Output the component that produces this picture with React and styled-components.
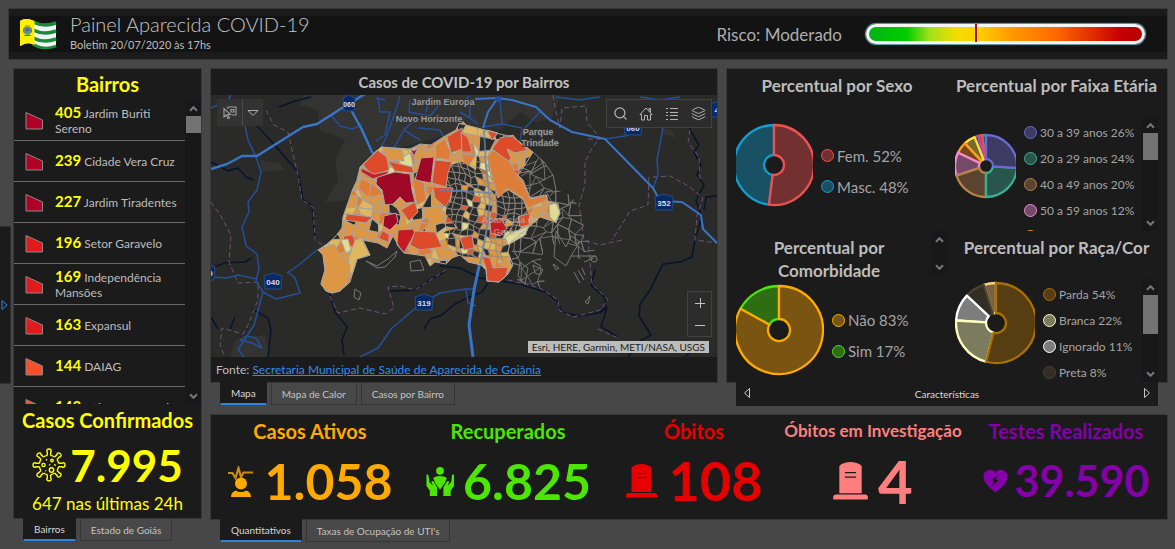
import React from 'react';
import styled, { createGlobalStyle } from 'styled-components';
import { Search, Layers } from 'lucide-react';

const GlobalStyle = createGlobalStyle`
  * {
    box-sizing: border-box;
  }

  body {
    margin: 0;
    background: #474747;
    color: #bdbdbd;
    font-family: Lato, "Liberation Sans", sans-serif;
    font-size: 12px;
  }

  button {
    font: inherit;
    color: inherit;
    background: none;
    border: 0;
    padding: 0;
    cursor: pointer;
  }

  h1, h2, p, ul {
    margin: 0;
    padding: 0;
  }

  ul {
    list-style: none;
  }
`;

/* ---------- data ---------- */

const districts = [
  { cases: 405, name: 'Jardim Buriti Sereno', color: '#b10026' },
  { cases: 239, name: 'Cidade Vera Cruz', color: '#b10026' },
  { cases: 227, name: 'Jardim Tiradentes', color: '#b10026' },
  { cases: 196, name: 'Setor Garavelo', color: '#e31a1c' },
  { cases: 169, name: 'Independência Mansões', color: '#e31a1c' },
  { cases: 163, name: 'Expansul', color: '#e31a1c' },
  { cases: 144, name: 'DAIAG', color: '#fc4e2a' },
  { cases: 143, name: 'Sítios Santa Luzia', color: '#fc4e2a' },
];

const sexo = [
  { label: 'Fem. 52%', value: 52, color: '#ed5151', fill: '#733030' },
  { label: 'Masc. 48%', value: 48, color: '#149ece', fill: '#1a5064' },
];

const faixa = [
  { label: '30 a 39 anos 26%', value: 26, color: '#6b6bd6', fill: '#3d3b63' },
  { label: '20 a 29 anos 24%', value: 24, color: '#3caf99', fill: '#29564b' },
  { label: '40 a 49 anos 20%', value: 20, color: '#b7814a', fill: '#5a4430' },
  { label: '50 a 59 anos 12%', value: 12, color: '#f789d8', fill: '#744a68' },
  { label: '60 a 69 anos 6%', value: 6, color: '#ff9a1f', fill: '#74481a' },
  { label: '10 a 19 anos 6%', value: 6, color: '#ffde3e', fill: '#756a2a' },
  { label: '0 a 9 anos 2%', value: 2, color: '#a553b7', fill: '#5b3264' },
  { label: '70 a 79 anos 2%', value: 2, color: '#ed5151', fill: '#ad3b3b' },
  { label: '80 anos 2%', value: 2, color: '#149ece', fill: '#1a5064' },
];

const comorbidade = [
  { label: 'Não 83%', value: 83, color: '#ffaa00', fill: '#7a5511' },
  { label: 'Sim 17%', value: 17, color: '#4ce600', fill: '#2f6d12' },
];

const raca = [
  { label: 'Parda 54%', value: 54, color: '#a87000', fill: '#573d12' },
  { label: 'Branca 22%', value: 22, color: '#ffffbe', fill: '#7b7b60' },
  { label: 'Ignorado 11%', value: 11, color: '#ffffff', fill: '#7d7d7d' },
  { label: 'Preta 8%', value: 8, color: '#4b4232', fill: '#322d25' },
  { label: 'Amarela 5%', value: 5, color: '#ffd37f', fill: '#7a6242' },
];

/* ---------- page ---------- */

const Page = styled.div`
  position: relative;
  display: flex;
  flex-direction: column;
  gap: 10px;
  min-height: 100vh;
  padding: 9px 8px 8px 9px;
`;

const Header = styled.header`
  padding: 7px 0;
  height: 50px;
  background: #1b1b1b;
  outline: 1px solid #383838;
`;

const HeaderBand = styled.div`
  display: flex;
  align-items: center;
  height: 36px;
  padding: 0 22px 0 10px;
  background: #131313;
`;

const HeaderText = styled.div`
  margin-left: 13px;
  flex: 1;
`;

const Title = styled.h1`
  font-size: 20px;
  line-height: 22px;
  font-weight: 300;
  color: #c6c6c6;
`;

const Subtitle = styled.p`
  font-size: 11px;
  line-height: 20px;
`;

const Risk = styled.span`
  font-size: 17px;
  margin-right: 24px;
  color: #aeaeae;
`;

const Gauge = styled.div`
  position: relative;
  width: 279px;
  height: 20px;
  border: 3px solid #f4f4f4;
  border-radius: 11px;
  box-shadow: 0 0 1px 1px #6fa3a8;
  background: linear-gradient(90deg, #00b414 0%, #00cd00 14%, #9fe01a 22%, #f5dc00 32%, #ffd000 40%, #ff9a00 52%, #ff6a00 68%, #c80000 92%, #b40000 100%);

  &::after {
    content: '';
    position: absolute;
    left: 39%;
    top: -3px;
    bottom: -1px;
    width: 2px;
    background: #a01414;
  }
`;

const Body = styled.div`
  display: grid;
  grid-template-columns: 187px 1fr;
  column-gap: 10px;
  flex: 1;
  padding-left: 5px;
`;

const Column = styled.div`
  display: flex;
  flex-direction: column;
  min-width: 0;
`;

const Panel = styled.section`
  background: #1b1b1b;
  outline: 1px solid #383838;
`;

const Right = styled.div`
  display: flex;
  flex-direction: column;
  gap: 9px;
  min-width: 0;
`;

const UpperRow = styled.div`
  display: grid;
  grid-template-columns: 506fr 440fr;
  gap: 10px;
`;

const Drawer = styled.button`
  position: absolute;
  left: 0;
  top: 226px;
  width: 11px;
  height: 158px;
  display: flex;
  align-items: center;
  background: #1b1b1b;
  border: 1px solid #303030;
  border-left: 0;
`;

const Tabs = styled.div`
  display: flex;
  gap: 4px;
  padding-left: 9px;
`;

const Tab = styled.button`
  height: 23px;
  padding: 0 10px;
  font-size: 10px;
  color: ${({ $active }) => ($active ? '#d8d8d8' : '#c4c4c4')};
  background: ${({ $active }) => ($active ? '#1b1b1b' : '#484848')};
  border: 1px solid ${({ $active }) => ($active ? '#1b1b1b' : '#363636')};
  border-bottom: ${({ $active }) => ($active ? '2px solid #2a84de' : '1px solid #363636')};
`;

/* ---------- list ---------- */

const ListTitle = styled.h2`
  font-size: 20px;
  line-height: 31px;
  font-weight: 700;
  text-align: center;
  color: #ffff00;
`;

const ListArea = styled.div`
  display: flex;
  height: 304px;
  overflow: hidden;
`;

const List = styled.ul`
  flex: 1;
  min-width: 0;
`;

const ListItem = styled.li`
  display: flex;
  align-items: center;
  height: 41px;
  padding: 0 2px 0 11px;
  border-bottom: 1px solid #6a6a6a;
  font-size: 12px;
  line-height: 15px;

  svg {
    flex: none;
    margin-right: 11px;
  }

  strong {
    font-size: 15px;
    line-height: 15px;
    color: #ffff00;
  }
`;

const ScrollTrack = styled.div`
  display: flex;
  flex-direction: column;
  flex: none;
  align-self: ${({ $top }) => ($top ? 'flex-start' : 'stretch')};
  align-items: center;
  width: 16px;
  height: ${({ $height }) => ($height ? `${$height}px` : 'auto')};
  background: #18181a;
`;

const ScrollButton = styled.button`
  display: flex;
  align-items: center;
  justify-content: center;
  width: 16px;
  height: 16px;
`;

const ScrollThumb = styled.div`
  width: 15px;
  height: ${({ $size }) => $size}px;
  background: #737375;
`;

const Spacer = styled.div`
  flex: 1;
`;

const Confirmed = styled.div`
  height: 114px;
  text-align: center;
  color: #ffff00;
`;

const ConfirmedTitle = styled.h2`
  font-size: 20px;
  line-height: 32px;
  font-weight: 700;
  white-space: nowrap;
`;

const ConfirmedValue = styled.div`
  display: flex;
  align-items: center;
  justify-content: center;
  gap: 4px;
  height: 58px;
  font-size: 44px;
  font-weight: 700;
`;

const ConfirmedNote = styled.p`
  font-size: 17px;
  line-height: 20px;
`;

/* ---------- map ---------- */

const MapTitle = styled.h2`
  font-size: 15px;
  line-height: 26px;
  font-weight: 700;
  text-align: center;
  color: #c2c2c2;
`;

const MapArea = styled.div`
  position: relative;
  height: 262px;
  background: #2a2a28;

  > svg {
    display: block;
    width: 100%;
    height: 100%;
  }
`;

const Tools = styled.div`
  position: absolute;
  top: 4px;
  left: 6px;
  display: flex;
  height: 27px;
  background: #333333;

  button {
    display: flex;
    align-items: center;
    justify-content: center;
    width: 25px;
  }

  button + button {
    width: 21px;
    border-left: 1px solid #4a4a4a;
  }
`;

const Toolbar = styled.div`
  position: absolute;
  top: 4px;
  right: 5px;
  display: flex;
  align-items: center;
  height: 29px;
  background: #2c2c2c;
  border: 1px solid #424242;
  color: #b4b4b4;

  button {
    display: flex;
    justify-content: center;
    width: 26px;
  }
`;

const Zoom = styled.div`
  position: absolute;
  right: 5px;
  bottom: 20px;
  display: flex;
  flex-direction: column;
  width: 25px;
  background: #2c2c2c;
  border: 1px solid #424242;

  button {
    display: flex;
    align-items: center;
    justify-content: center;
    height: 22px;
  }
`;

const Attribution = styled.span`
  position: absolute;
  right: 8px;
  bottom: 4px;
  padding: 0 4px;
  font-size: 10px;
  line-height: 12px;
  color: #202020;
  background: #bcbcba;
`;

const Source = styled.p`
  padding-left: 5px;
  font-size: 12px;
  line-height: 25px;

  a {
    color: #2e8ef0;
  }
`;

/* ---------- charts ---------- */

const Charts = styled(Panel)`
  display: grid;
  grid-template-columns: 211fr 203fr;
  grid-template-rows: 162px 151px;
  column-gap: 8px;
  padding: 0 9px;
`;

const ChartCell = styled.div`
  display: flex;
  flex-direction: column;
  min-width: 0;
  min-height: 0;
`;

const ChartHead = styled.div`
  display: flex;
  flex: none;
  height: ${({ $height }) => $height}px;
`;

const ChartTitle = styled.h2`
  flex: 1;
  padding: 5px ${({ $inset }) => $inset || 0}px 0 0;
  font-size: 17px;
  line-height: 23px;
  font-weight: 700;
  text-align: center;
  white-space: ${({ $wrap }) => ($wrap ? 'normal' : 'nowrap')};
`;

const ChartBody = styled.div`
  display: flex;
  align-items: center;
  flex: 1;
  min-height: 0;
  overflow: hidden;

  > svg {
    flex: none;
    margin-bottom: ${({ $dense }) => ($dense ? '16px' : '0')};
  }
`;

const Legend = styled.ul`
  flex: 1;
  align-self: ${({ $dense }) => ($dense ? 'flex-start' : 'center')};
  padding: ${({ $dense }) => ($dense ? '2px 0 0 8px' : '12px 0 0 8px')};
  font-size: ${({ $dense }) => ($dense ? '12px' : '15px')};
  color: #a4a4a4;
`;

const LegendItem = styled.li`
  display: flex;
  align-items: center;
  gap: 3px;
  height: ${({ $dense }) => ($dense ? '26px' : '31px')};
  white-space: nowrap;
`;

const Dot = styled.span`
  width: 13px;
  height: 13px;
  border-radius: 50%;
  border: 1px solid ${({ $color }) => $color};
  background: ${({ $fill }) => $fill};
`;

const Carousel = styled.nav`
  display: flex;
  align-items: center;
  justify-content: space-between;
  height: 24px;
  margin: 0 9px;
  padding: 0 7px;
  font-size: 10px;
  color: #dadada;
  background: #1b1b1b;
`;

/* ---------- metrics ---------- */

const Metrics = styled(Panel)`
  display: grid;
  grid-template-columns: 198fr 198fr 174fr 184fr 202fr;
  height: 104px;
`;

const Metric = styled.div`
  display: flex;
  flex-direction: column;
  align-items: center;
  color: ${({ $color }) => $color};
`;

const MetricTitle = styled.h2`
  font-size: ${({ $small }) => ($small ? '17px' : '20px')};
  line-height: 32px;
  font-weight: 700;
  white-space: nowrap;
`;

const MetricValue = styled.div`
  display: flex;
  align-items: center;
  gap: ${({ $gap }) => $gap || 12}px;
  height: 68px;
  font-size: ${({ $size }) => $size}px;
  line-height: 60px;
  font-weight: 700;
`;

/* ---------- helpers ---------- */

const Chevron = ({ down }) => (
  <svg width="9" height="7" viewBox="0 0 9 7" fill="none" stroke="#77777a" strokeWidth="2">
    <path d={down ? 'M1 1.2L4.5 4.8L8 1.2' : 'M1 5.8L4.5 2.2L8 5.8'} />
  </svg>
);

const Scrollbar = ({ thumb, height, top }) => (
  <ScrollTrack $height={height} $top={top}>
    <ScrollButton type="button" aria-label="Rolar para cima"><Chevron /></ScrollButton>
    {thumb && <ScrollThumb $size={thumb} />}
    <Spacer />
    <ScrollButton type="button" aria-label="Rolar para baixo"><Chevron down /></ScrollButton>
  </ScrollTrack>
);

const point = (cx, cy, r, t) => {
  const a = t * Math.PI * 2 - Math.PI / 2;
  return `${(cx + r * Math.cos(a)).toFixed(2)} ${(cy + r * Math.sin(a)).toFixed(2)}`;
};

const Pie = ({ data, width, height, cx, r, inner }) => {
  const cy = height / 2;
  const total = data.reduce((sum, d) => sum + d.value, 0);
  let start = 0;
  const slices = data.map((d) => {
    const a = start / total;
    start += d.value;
    const b = start / total;
    const large = b - a > 0.5 ? 1 : 0;
    const path = `M${point(cx, cy, r, a)}A${r} ${r} 0 ${large} 1 ${point(cx, cy, r, b)}L${point(cx, cy, inner, b)}A${inner} ${inner} 0 ${large} 0 ${point(cx, cy, inner, a)}Z`;
    return { ...d, path };
  });

  return (
    <svg width={width} height={height} viewBox={`0 0 ${width} ${height}`}>
      {[...slices].reverse().map((s) => (
        <path key={s.label} d={s.path} fill={s.fill} stroke={s.color} strokeWidth="2.300" strokeLinejoin="round" />
      ))}
    </svg>
  );
};

const Chart = ({ title, data, pie, dense, headHeight, inset, wrap, thumb }) => (
  <ChartCell>
    <ChartHead $height={headHeight}>
      <ChartTitle $wrap={wrap} $inset={inset}>{title}</ChartTitle>
      {wrap && <Scrollbar height={44} top />}
    </ChartHead>
    <ChartBody $dense={dense}>
      <Pie data={data} {...pie} />
      <Legend $dense={dense}>
        {data.map((d) => (
          <LegendItem key={d.label} $dense={dense}>
            <Dot $color={d.color} $fill={d.fill} />
            {d.label}
          </LegendItem>
        ))}
      </Legend>
      {thumb && <Scrollbar thumb={thumb} />}
    </ChartBody>
  </ChartCell>
);

/* ---------- icons ---------- */

const Flag = () => (
  <svg width="38" height="32" viewBox="0 0 38 32">
    <path d="M1 3C6 0 10 1 15 3C22 7 29 7 37 4V28C29 32 22 31 15 27C10 24 6 25 1 28Z" fill="#f2f6f2" />
    <g fill="none" stroke="#1c8a3c" strokeWidth="3.600">
      <path d="M14 4C22 8 29 8 37 5" />
      <path d="M14 12C22 16 29 16 37 13" />
      <path d="M14 20C22 24 29 24 37 21" />
      <path d="M14 26.500C22 31 29 31 37 28" strokeWidth="2.600" />
    </g>
    <path d="M1 3C6 0 10 1 15.500 3V27C10 24 6 25 1 28Z" fill="#fff000" />
    <path d="M5 9h7v6q-3.500 4-7 0Z" fill="#5d958c" />
    <path d="M6 8h5M4.500 10.500v4M12.500 10.500v4M5 17.500h7M8.500 9.500v5M6 12.500h5" stroke="#77763c" strokeWidth="1" fill="none" />
    <path d="M7 10.500h3v2H7Z" fill="#3a6dac" />
  </svg>
);

const spikes = [0, 45, 90, 135, 180, 225, 270, 315];

const Virus = () => (
  <svg width="34" height="34" viewBox="-17 -17 34 34" fill="none" stroke="currentColor" strokeWidth="1.400">
    {spikes.map((angle) => (
      <g key={angle} transform={`rotate(${angle})`}>
        <path d="M-1.700 -9.600V-13C-3 -14.200 -2 -16 0 -16C2 -16 3 -14.200 1.700 -13V-9.600" />
        <path d="M1.700 -9.600A9.750 9.750 0 0 1 5.600 -8" />
      </g>
    ))}
    <circle cx="-5.500" cy="0" r="1.600" />
    <circle cx="2.500" cy="5" r="2.200" />
    <circle cx="3" cy="-4.500" r="1.200" />
    <path d="M-3 -5.500l1 .5M5.500 .5l1 -1M-3.500 5.500l.5 .5M.2 -.5l.8 .6" strokeWidth="1.800" />
  </svg>
);

const Sick = () => (
  <svg width="25" height="31" viewBox="0 0 25 31">
    <path d="M0 7H4.500L7.500 12L10.500 2L13 11L15.500 6.500H25" fill="none" stroke="#c98c10" strokeWidth="2.200" />
    <circle cx="13" cy="17.500" r="6" fill="currentColor" />
    <path d="M3 31C3 28 4.500 25.500 8 24.500C11 26.500 15 26.500 18 24.500C21.500 25.500 23 28 23 31Z" fill="currentColor" />
  </svg>
);

const Hands = () => (
  <svg width="31" height="31" viewBox="0 0 32 31" fill="currentColor">
    <circle cx="15.500" cy="4.500" r="4" />
    <path d="M8.500 12C11 9 20 9 22.500 12L20.500 17L15.500 24L10.500 17Z" />
    <path d="M1.500 8.500C2.500 8 3.500 8.500 3.700 9.500L4.500 16L8 19.500L6.500 15.500C7.500 14.500 8.700 15 9.200 16L12.500 21.500V30.500H5V25L1.500 20Z" />
    <path d="M30 8.500C29 8 28 8.500 27.800 9.500L27 16L23.500 19.500L25 15.500C24 14.500 22.800 15 22.300 16L19 21.500V30.500H26.500V25L30 20Z" />
  </svg>
);

const Tombstone = ({ size }) => (
  <svg width={size - 1} height={size + 2} viewBox="0 0 31 34">
    <path d="M5.500 28V3.500C8 1 12 0 15.500 0C19 0 23 1 25.500 3.500V28Z" fill="currentColor" />
    <path d="M0 33.500V31.500Q0 29 2.500 29H28.500Q31 29 31 31.500V33.500Z" fill="currentColor" />
    <path d="M10.500 9.500h10M10.500 13.500h10" stroke="#1b1b1b" strokeWidth="1.200" />
  </svg>
);

const BrokenHeart = () => (
  <svg width="25" height="24" viewBox="0 0 25 24">
    <path d="M12.500 23.500C8 19.500 0 14 .5 7C1 1 9 -1.500 12.500 3.500C16 -1.500 24 1 24.500 7C25 14 17 19.500 12.500 23.500Z" fill="currentColor" />
    <path d="M14.500 6.500L8.500 11L11 12L9 17L15.500 11.500L12.800 10.500Z" fill="#1b1b1b" />
  </svg>
);

/* ---------- map drawing ---------- */

const random = (seed) => {
  let s = seed;
  return () => {
    s = (s * 16807) % 2147483647;
    return s / 2147483647;
  };
};

const buildCells = (x0, y0, x1, y1, size, jitter, seed) => {
  const rnd = random(seed);
  const rows = [];
  for (let y = y0; y <= y1 + size; y += size) {
    const row = [];
    for (let x = x0; x <= x1 + size; x += size) {
      row.push([
        x + (rnd() - 0.5) * jitter * 2 + Math.sin(y / 14) * 4,
        y + (rnd() - 0.5) * jitter * 2 + Math.sin(x / 19) * 6,
      ]);
    }
    rows.push(row);
  }
  const cells = [];
  for (let j = 0; j < rows.length - 1; j += 1) {
    for (let i = 0; i < rows[j].length - 1; i += 1) {
      const quad = [rows[j][i], rows[j][i + 1], rows[j + 1][i + 1], rows[j + 1][i]];
      cells.push({
        x: quad[0][0],
        y: quad[0][1],
        v: rnd(),
        points: quad.map((p) => `${p[0].toFixed(1)},${p[1].toFixed(1)}`).join(' '),
      });
    }
  }
  return cells;
};

const empty = '#2c2c2a';

const wideColor = ({ v }) => {
  if (v < 0.5) return '#dc9644';
  if (v < 0.64) return '#de7d38';
  if (v < 0.82) return '#dfb75f';
  if (v < 0.88) return '#dedc94';
  if (v < 0.95) return empty;
  return '#dd4d2b';
};

const denseColor = ({ x, y, v }) => {
  const blank = y < 232 && (x < 474 || x > 494) ? 0.86 : 0.26;
  if (v < blank) return empty;
  const rest = (v - blank) / (1 - blank);
  if (rest < 0.4) return '#dc9644';
  if (rest < 0.72) return '#dfb75f';
  if (rest < 0.86) return '#dedc94';
  return '#de5b30';
};

const wideCells = buildCells(314, 110, 562, 296, 9, 4, 4177);
const denseCells = buildCells(440, 155, 530, 264, 6, 2, 913);
const eastCells = buildCells(500, 145, 600, 290, 9, 5, 2718);

const outline = '360,167 381,147 410,149 420,144 431,145 445,136 456,130 461,119 466,125 485,130 500,134 513,137 521,143 533,152 525,165 516,178 523,182 530,199 546,195 548,201 558,204 560,214 555,222 540,217 528,228 510,243 508,252 513,265 508,274 499,282 487,281 486,270 481,265 468,262 460,255 452,258 446,264 435,262 430,266 425,256 404,253 398,245 393,236 387,248 378,243 362,240 370,255 357,259 352,275 350,282 340,291 332,293 326,291 321,284 325,270 323,255 318,250 327,244 335,237 342,228 343,217 352,191 357,180';
const denseOutline = '447,166 462,162 476,170 478,140 486,145 490,170 498,198 508,190 523,200 529,216 510,243 508,262 484,258 460,256 448,246 444,232 458,228 446,214';
const eastOutline = '531,152 544,162 553,175 556,190 570,195 580,208 583,222 586,240 595,250 592,262 578,258 566,240 556,246 548,240 540,262 546,288 530,284 518,282 512,262 512,244 528,228 540,217 556,222 560,208 548,200 530,200 516,178 526,164';

const highlights = [
  ['#a00828', '377,177 395,172 410,174 412,190 415,202 406,203 400,197 393,204 385,205 382,190 376,184'],
  ['#a00828', '421,158 434,157 431,183 415,180'],
  ['#a00828', '384,216 396,213 398,222 390,230 383,226'],
  ['#a00828', '410,148 414,151 418,148 414,156'],
  ['#dd4b2a', '363,165 377,150 387,157 389,170 373,176'],
  ['#c2202a', '361,168 374,174 389,171 387,174 373,179 361,172'],
  ['#dd4b2a', '388,161 412,167 414,173 395,171'],
  ['#dc9644', '382,147 402,150 404,161 388,160'],
  ['#de7d38', '435,146 445,139 451,153 449,160 436,158'],
  ['#dd4b2a', '435,160 452,162 448,173 446,187 432,183'],
  ['#dd4b2a', '433,187 453,188 450,200 445,207 435,198'],
  ['#dd4b2a', '447,137 462,128 465,148 451,153'],
  ['#dd4b2a', '461,132 468,138 472,152 462,152'],
  ['#dd4b2a', '487,130 498,133 492,140'],
  ['#dd4b2a', '492,149 500,138 513,135 517,140 527,150 515,153 507,149 511,158 508,162'],
  ['#de7d38', '487,157 493,150 510,162 515,172 523,180 530,198 547,195 547,200 528,208 523,198 507,188 498,198'],
  ['#dd4b2a', '401,210 415,202 418,212 409,221'],
  ['#dd4b2a', '345,220 347,214 372,217 366,223'],
  ['#c41c22', '398,230 413,229 415,233 404,253 397,245'],
  ['#dd4b2a', '415,231 435,232 442,247 420,250 410,245'],
  ['#de7d38', '412,178 424,183 426,200 417,205'],
  ['#dc9644', '426,208 440,206 446,222 430,226'],
  ['#c41c22', '490,222 500,218 507,228 500,236 491,233'],
  ['#dedc94', '505,237 514,232 529,226 525,235 508,245'],
  ['#dd4b2a', '518,217 530,213 529,225 520,227'],
  ['#dedc94', '549,205 556,203 560,212 556,223 550,217'],
  ['#dd4b2a', '460,238 472,235 474,248 464,250'],
  ['#dd4b2a', '482,256 490,258 493,268 508,267 506,276 499,282 487,281 486,268'],
  ['#dfb75f', '349,258 355,240 362,238 370,255 357,259 352,275 348,268'],
  ['#dc9644', '318,250 334,244 342,256 350,265 348,282 340,291 332,293 326,291 321,284 325,270 323,255'],
  ['#de7d38', '336,248 342,242 346,250 340,254'],
  ['#dedc94', '341,240 348,239 351,250 346,253'],
];

const Shield = ({ x, y, label, small }) => {
  const w = small ? 6 : 9;
  return (
    <g transform={`translate(${x} ${y})`}>
      <path
        d={`M${-w} -5L0 -8L${w} -5L${w - 1} 8H${1 - w}Z`}
        fill="#062a66"
        stroke="#274c85"
        strokeWidth="1"
      />
      <text y="4" textAnchor="middle" fontSize={small ? 7 : 8} fontWeight="700" fill="#d4dcec">{label}</text>
    </g>
  );
};

const CityMap = () => (
  <svg
    viewBox="211 95 506 262"
    preserveAspectRatio="xMidYMid slice"
    fontFamily="Liberation Sans, sans-serif"
    role="img"
    aria-label="Mapa de casos por bairro"
  >
    <defs>
      <clipPath id="city"><polygon points={outline} /></clipPath>
      <clipPath id="dense"><polygon points={denseOutline} /></clipPath>
      <clipPath id="east"><polygon points={eastOutline} /></clipPath>
    </defs>

    <g fill="#333332">
      <path d="M303 95H560L552 118L535 122L520 112L500 130L470 128L400 148L372 165L350 200L325 202L338 180L335 160L345 140L320 130L318 110L300 105Z" />
      <path d="M260 160L280 163L284 170L262 172ZM235 340L265 335L270 357H230ZM660 128L672 130L676 138L662 134Z" />
    </g>

    <g fill="none" stroke="#08132d" strokeWidth="1.500">
      <path d="M279 107L295 101L311 97" />
      <path d="M257 126L272 142L284 156L298 172L303 200L312 206L315 240" />
      <path d="M211 162L228 171L238 168L246 177L253 180" />
      <path d="M211 268L225 263L245 262L252 258" />
      <path d="M252 309L268 318L271 330L268 357M211 317L218 329M235 317L230 329" />
      <path d="M330 294L335 312L347 327L342 340L344 355" />
      <path d="M424 329L430 319L442 315L455 304L465 299L482 292L488 283" />
      <path d="M440 266L460 268L480 278L520 284L545 292L558 302L562 312L578 316L598 313L606 308L605 298L591 285L595 270" />
      <path d="M390 291L415 290L430 280L446 271" />
      <path d="M717 196L706 197L704 210M690 112L690 130L699 145L694 152L701 165L697 175L704 185L696 200L702 218L696 235L692 257L680 262L663 264L650 290L640 304L639 316L651 335L640 341L628 357" />
      <path d="M600 313L607 308L601 327L618 337M700 343L685 357" />
    </g>

    <g fill="none" stroke="#6a5673" strokeWidth="1" strokeDasharray="5 3">
      <path d="M266 110L274 125L288 132L292 150L298 175L302 200L313 207L315 240L330 250" />
      <path d="M211 202L222 218L231 235L229 262L238 283L258 282L258 300L248 325L243 334L222 328L220 345L225 357" />
      <path d="M330 296L338 313L360 308L385 314L394 308L388 287L400 286L415 290L446 270" />
      <path d="M553 95L556 112L560 128L562 108L586 106L587 122L600 138L592 148L585 162L585 185L579 205L584 240L600 245L622 240" />
      <path d="M601 139L587 139M653 177L670 176L690 187L703 198L697 215L695 240L717 243M649 177L648 205L630 211L622 224L612 240" />
      <path d="M508 280L540 288L558 300L560 311L574 317L600 310L608 300L592 284L590 262L588 240" />
      <path d="M598 329L618 338M690 130L688 142L699 157L700 180" />
    </g>

    <g fill="none" stroke="#24509a" strokeWidth="1.500" strokeLinejoin="round">
      <path d="M245 126L248 140L256 157L261 172L257 190L248 202L249 212L242 227L246 246L257 254L259 268L256 281L263 292L254 325L238 350L244 357" />
      <path d="M211 277L227 278L238 275L257 279M287 273L300 264L318 249M263 292L276 299L300 293L295 278L288 272" />
      <path d="M211 108L228 100L231 95M240 340L252 343L262 348L256 338L246 336Z" />
      <path d="M332 116L340 126L352 129L362 125" />
      <path d="M374 160L386 138L398 104L400 95M378 98L380 112L390 112L385 135L376 141M394 148L404 130L412 122L425 117L436 123L456 118" />
      <path d="M410 100L409 112L430 116L440 104L462 104L470 95M430 95L426 112M404 130L420 140M470 99V118L478 124M500 98L502 124L522 128L520 142M483 127L502 124M525 128L540 112M534 146L540 140M460 112L470 118M385 100L376 98M418 128L440 130L445 140" />
      <path d="M605 139L625 136L640 128M663 128L657 160L658 175L653 188M640 97L660 100L680 97M556 97L580 100L600 97" />
      <path d="M360 357L378 348L392 328L418 306L440 293L465 289L475 289" />
      <path d="M466 290L468 303L476 306" />
    </g>

    <g fill="none" stroke="#3875c9" strokeWidth="3" strokeLinejoin="round">
      <path d="M211 169L227 164L242 156L257 156L303 127L317 124L342 108L365 94" strokeWidth="2.500" />
      <path d="M350 108L362 130L372 152L378 158" strokeWidth="2.500" />
      <path d="M475 99L497 98L512 100L536 107L550 120L572 132L605 139L653 188L660 201L682 202L701 215L703 229L717 243" strokeWidth="2" />
      <path d="M497 99L488 112L483 128" strokeWidth="2" />
      <path d="M480 262L474 290L469 325L473 357" />
    </g>
    <circle cx="498" cy="99" r="3" fill="#24509a" />

    <g clipPath="url(#east)" fill="none" stroke="#777775" strokeWidth="0.900">
      {eastCells.map((c) => (c.v > 0.4 ? <polygon key={c.points} points={c.points} /> : null))}
    </g>
    <g fill="none" stroke="#777775" strokeWidth="1">
      <path d="M533 152L544 162L553 175L556 190L550 196M544 162L533 170L521 176M553 175L538 183L526 186" />
      <path d="M366 261L377 266L388 259L397 251L395 257L385 267L377 268ZM410 262L420 260L424 270L411 271ZM355 289L361 293L359 300L354 297ZM556 231L566 247L571 236L580 242L571 256L566 266L554 257ZM571 256H596M584 262L594 258M585 302L590 296L588 304ZM574 272L580 283M578 270L584 280M582 268L585 275M533 265L543 270L540 275L535 273ZM553 264L559 268L556 270ZM520 262L528 268L525 284L518 276Z" />
      <circle cx="594" cy="259" r="3" />
    </g>

    <g clipPath="url(#city)" stroke="#aaa49c" strokeWidth="1">
      {wideCells.map((c) => <polygon key={c.points} points={c.points} fill={wideColor(c)} />)}
      <g clipPath="url(#dense)" stroke="#8f8c87" strokeWidth="0.800">
        {denseCells.map((c) => <polygon key={c.points} points={c.points} fill={denseColor(c)} />)}
      </g>
    </g>
    <g stroke="#aaa49c" strokeWidth="1" strokeLinejoin="round">
      {highlights.map(([fill, points]) => <polygon key={points} points={points} fill={fill} />)}
      <polygon points={outline} fill="none" />
    </g>
    <path d="M484 130L486 165L490 200L486 235L480 264M440 190L462 191L491 193" fill="none" stroke="#5d86bd" strokeWidth="2" opacity="0.700" />

    <g fill="#9b9b99" fontSize="9" fontWeight="700" textAnchor="middle" stroke="#333332" strokeWidth="2" paintOrder="stroke">
      <text x="443" y="105">Jardim Europa</text>
      <text x="429" y="122">Novo Horizonte</text>
      <text x="538" y="135">Parque</text>
      <text x="540" y="146">Trindade</text>
    </g>
    <g fill="#bdbdb8" fontSize="9" fontWeight="700" textAnchor="middle" opacity="0.600">
      <text x="510" y="223">Aparecida de</text>
      <text x="510" y="235">Goiânia</text>
    </g>

    <Shield x={349} y={103} label="060" small />
    <Shield x={273} y={281} label="040" />
    <Shield x={424} y={302} label="319" />
    <Shield x={664} y={202} label="352" />
    <Shield x={633} y={127} label="060" />
    <Shield x={719} y={109} label="40" />
    <Shield x={206} y={272} label="060" />
  </svg>
);

const MapPanel = () => (
  <Column>
    <Panel>
      <MapTitle>Casos de COVID-19 por Bairros</MapTitle>
      <MapArea>
        <CityMap />
        <Tools>
          <button type="button" aria-label="Selecionar">
            <svg width="14" height="14" viewBox="0 0 14 14" fill="none" stroke="#a0a0a0" strokeWidth="1.100">
              <path d="M1 2.500V11L3.200 9L5 12.500L6.500 11.700L4.800 8.500H7.500Z" />
              <path d="M5 3V1H13V9H8.500M8 6V3.500H11V6Z" />
            </svg>
          </button>
          <button type="button" aria-label="Opções de seleção">
            <svg width="12" height="8" viewBox="0 0 12 8" fill="none" stroke="#b0b0b0"><path d="M1 1.500H11L6 6.500Z" /></svg>
          </button>
        </Tools>
        <Toolbar>
          <button type="button" aria-label="Pesquisar"><Search size={15} strokeWidth={2} /></button>
          <button type="button" aria-label="Início">
            <svg width="14" height="14" viewBox="0 0 14 14" fill="none" stroke="currentColor" strokeWidth="1">
              <path d="M1 7.500L7 1L13 7.500H11.500V13H8.500V8.500H5.500V13H2.500V7.500ZM10 4V1.500H11.500V5.500" />
            </svg>
          </button>
          <button type="button" aria-label="Legenda">
            <svg width="14" height="14" viewBox="0 0 14 14" fill="none" stroke="currentColor" strokeWidth="1">
              <path d="M1 1.500h2M5 1.500h8M1 5.500h2M5 5.500h8M1 8.500h2M5 8.500h8M1 12.500h2M5 12.500h8" />
            </svg>
          </button>
          <button type="button" aria-label="Camadas"><Layers size={15} strokeWidth={1.5} /></button>
        </Toolbar>
        <Zoom>
          <button type="button" aria-label="Aproximar">
            <svg width="12" height="12" viewBox="0 0 12 12" stroke="#c4c4c4"><path d="M1 6.500H11M6.500 1V11" /></svg>
          </button>
          <button type="button" aria-label="Afastar">
            <svg width="12" height="12" viewBox="0 0 12 12" stroke="#c4c4c4"><path d="M1 6.500H11" /></svg>
          </button>
        </Zoom>
        <Attribution>Esri, HERE, Garmin, METI/NASA, USGS</Attribution>
      </MapArea>
      <Source>
        Fonte: <a href="#fonte">Secretaria Municipal de Saúde de Aparecida de Goiânia</a>
      </Source>
    </Panel>
    <Tabs>
      <Tab type="button" $active>Mapa</Tab>
      <Tab type="button">Mapa de Calor</Tab>
      <Tab type="button">Casos por Bairro</Tab>
    </Tabs>
  </Column>
);

const App = () => (
  <>
    <GlobalStyle />
    <Page>
      <Header>
        <HeaderBand>
          <Flag />
          <HeaderText>
            <Title>Painel Aparecida COVID-19</Title>
            <Subtitle>Boletim 20/07/2020 às 17hs</Subtitle>
          </HeaderText>
          <Risk>Risco: Moderado</Risk>
          <Gauge />
        </HeaderBand>
      </Header>

      <Body>
        <Column>
          <Panel>
            <ListTitle>Bairros</ListTitle>
            <ListArea>
              <List>
                {districts.map((d) => (
                  <ListItem key={d.name}>
                    <svg width="19" height="19" viewBox="0 0 19 19">
                      <path d="M1 1.500L17.500 9V18H1Z" fill={d.color} stroke="#8a8a8a" />
                    </svg>
                    <span><strong>{d.cases}</strong> {d.name}</span>
                  </ListItem>
                ))}
              </List>
              <Scrollbar thumb={17} />
            </ListArea>
            <Confirmed>
              <ConfirmedTitle>Casos Confirmados</ConfirmedTitle>
              <ConfirmedValue><Virus />7.995</ConfirmedValue>
              <ConfirmedNote>647 nas últimas 24h</ConfirmedNote>
            </Confirmed>
          </Panel>
          <Tabs>
            <Tab type="button" $active>Bairros</Tab>
            <Tab type="button">Estado de Goiás</Tab>
          </Tabs>
        </Column>

        <Right>
          <UpperRow>
            <MapPanel />
            <Column>
              <Charts>
                <Chart title="Percentual por Sexo" data={sexo} headHeight={30} inset={9} pie={{ width: 77, height: 84, cx: 38, r: 40, inner: 10 }} />
                <Chart title="Percentual por Faixa Etária" data={faixa} headHeight={48} dense thumb={27} pie={{ width: 61, height: 66, cx: 31, r: 31, inner: 7 }} />
                <Chart title="Percentual por Comorbidade" data={comorbidade} headHeight={46} inset={9} wrap pie={{ width: 88, height: 92, cx: 43, r: 44, inner: 11 }} />
                <Chart title="Percentual por Raça/Cor" data={raca} headHeight={48} dense thumb={39} pie={{ width: 80, height: 84, cx: 41, r: 40, inner: 10 }} />
              </Charts>
              <Carousel>
                <button type="button" aria-label="Anterior">
                  <svg width="8" height="12" viewBox="0 0 8 12" fill="none" stroke="#c8c8c8"><path d="M6.500 1.500V10.500L1.500 6Z" /></svg>
                </button>
                <span>Características</span>
                <button type="button" aria-label="Próximo">
                  <svg width="8" height="12" viewBox="0 0 8 12" fill="none" stroke="#c8c8c8"><path d="M1.500 1.500V10.500L6.500 6Z" /></svg>
                </button>
              </Carousel>
            </Column>
          </UpperRow>

          <Column>
            <Metrics>
              <Metric $color="#ffaa00">
                <MetricTitle>Casos Ativos</MetricTitle>
                <MetricValue $size={50}><Sick />1.058</MetricValue>
              </Metric>
              <Metric $color="#4ce600">
                <MetricTitle>Recuperados</MetricTitle>
                <MetricValue $size={50} $gap={7}><Hands />6.825</MetricValue>
              </Metric>
              <Metric $color="#e60000">
                <MetricTitle>Óbitos</MetricTitle>
                <MetricValue $size={54}><Tombstone size={32} />108</MetricValue>
              </Metric>
              <Metric $color="#ff7f7f">
                <MetricTitle $small>Óbitos em Investigação</MetricTitle>
                <MetricValue $size={60} $gap={10}><Tombstone size={36} />4</MetricValue>
              </Metric>
              <Metric $color="#8400a8">
                <MetricTitle>Testes Realizados</MetricTitle>
                <MetricValue $size={43} $gap={7}><BrokenHeart />39.590</MetricValue>
              </Metric>
            </Metrics>
            <Tabs>
              <Tab type="button" $active>Quantitativos</Tab>
              <Tab type="button">Taxas de Ocupação de UTI's</Tab>
            </Tabs>
          </Column>
        </Right>
      </Body>
      <Drawer type="button" aria-label="Abrir painel lateral">
        <svg width="8" height="12" viewBox="0 0 8 12" fill="none" stroke="#2a84de"><path d="M2 1.500V10.500L7 6Z" /></svg>
      </Drawer>
    </Page>
  </>
);

export default App;
